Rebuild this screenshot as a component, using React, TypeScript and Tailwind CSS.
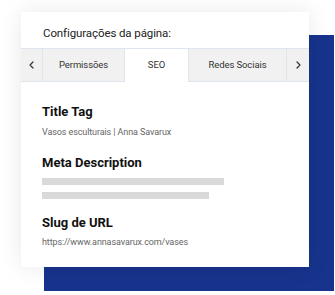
import React from 'react';

const Chevron = ({ dir }: { dir: 'left' | 'right' }) => (
  <svg width="5" height="8" viewBox="0 0 5 8" fill="none">
    <path
      d={dir === 'left' ? 'M4 1L1 4l3 3' : 'M1 1l3 3-3 3'}
      stroke="#333"
      strokeWidth="1.2"
      strokeLinecap="round"
      strokeLinejoin="round"
    />
  </svg>
);

const App = () => {
  return (
    <div className="relative w-[335px] h-[295px] bg-white overflow-hidden font-['Roboto',sans-serif]">
      <div className="absolute left-[44px] top-[35px] w-[290px] h-[256px] bg-[#17338c]" />

      <div className="relative pt-[12px] pl-[21px]">
        <div className="w-[288px] h-[255px] bg-white shadow-[0_0_22px_rgba(0,0,0,0.09)]">
          <div className="h-[36px] pl-[22px] pt-[13px] text-[11.5px] leading-[16px] tracking-[-0.1px] text-[#222]">
            Configurações da página:
          </div>

          <div className="flex h-[34px] text-[9.5px] tracking-[-0.1px] text-[#333]">
            <div className="w-[22px] flex items-center justify-center bg-[#f1f1f1] border-t border-b border-r border-[#dfe5ec]">
              <Chevron dir="left" />
            </div>
            <div className="w-[82px] flex items-center justify-center bg-[#f1f1f1] border-t border-b border-r border-[#dfe5ec]">
              Permissões
            </div>
            <div className="w-[63px] flex items-center justify-center bg-white border-t border-[#dfe5ec]">
              SEO
            </div>
            <div className="w-[99px] flex items-center justify-center bg-[#f1f1f1] border-t border-b border-l border-r border-[#dfe5ec]">
              Redes Sociais
            </div>
            <div className="w-[22px] flex items-center justify-center bg-[#f1f1f1] border-t border-b border-[#dfe5ec]">
              <Chevron dir="right" />
            </div>
          </div>

          <div className="flex flex-col pl-[21px]">
            <h2 className="mt-[22px] text-[13px] leading-[16px] font-bold text-[#111]">Title Tag</h2>
            <p className="mt-[5px] text-[9px] leading-[14px] tracking-[-0.1px] text-[#666]">Vasos esculturais | Anna Savarux</p>
            <h2 className="mt-[16px] text-[13px] leading-[16px] font-bold text-[#111]">Meta Description</h2>
            <div className="mt-[7px] w-[182px] h-[7px] bg-[#d9d9d9]" />
            <div className="mt-[7px] w-[167px] h-[7px] bg-[#d9d9d9]" />
            <h2 className="mt-[16px] text-[13px] leading-[16px] font-bold text-[#111]">Slug de URL</h2>
            <p className="mt-[4px] text-[9px] leading-[14px] tracking-[-0.1px] text-[#666]">https://www.annasavarux.com/vases</p>
          </div>
        </div>
      </div>
    </div>
  );
};

export default App;
